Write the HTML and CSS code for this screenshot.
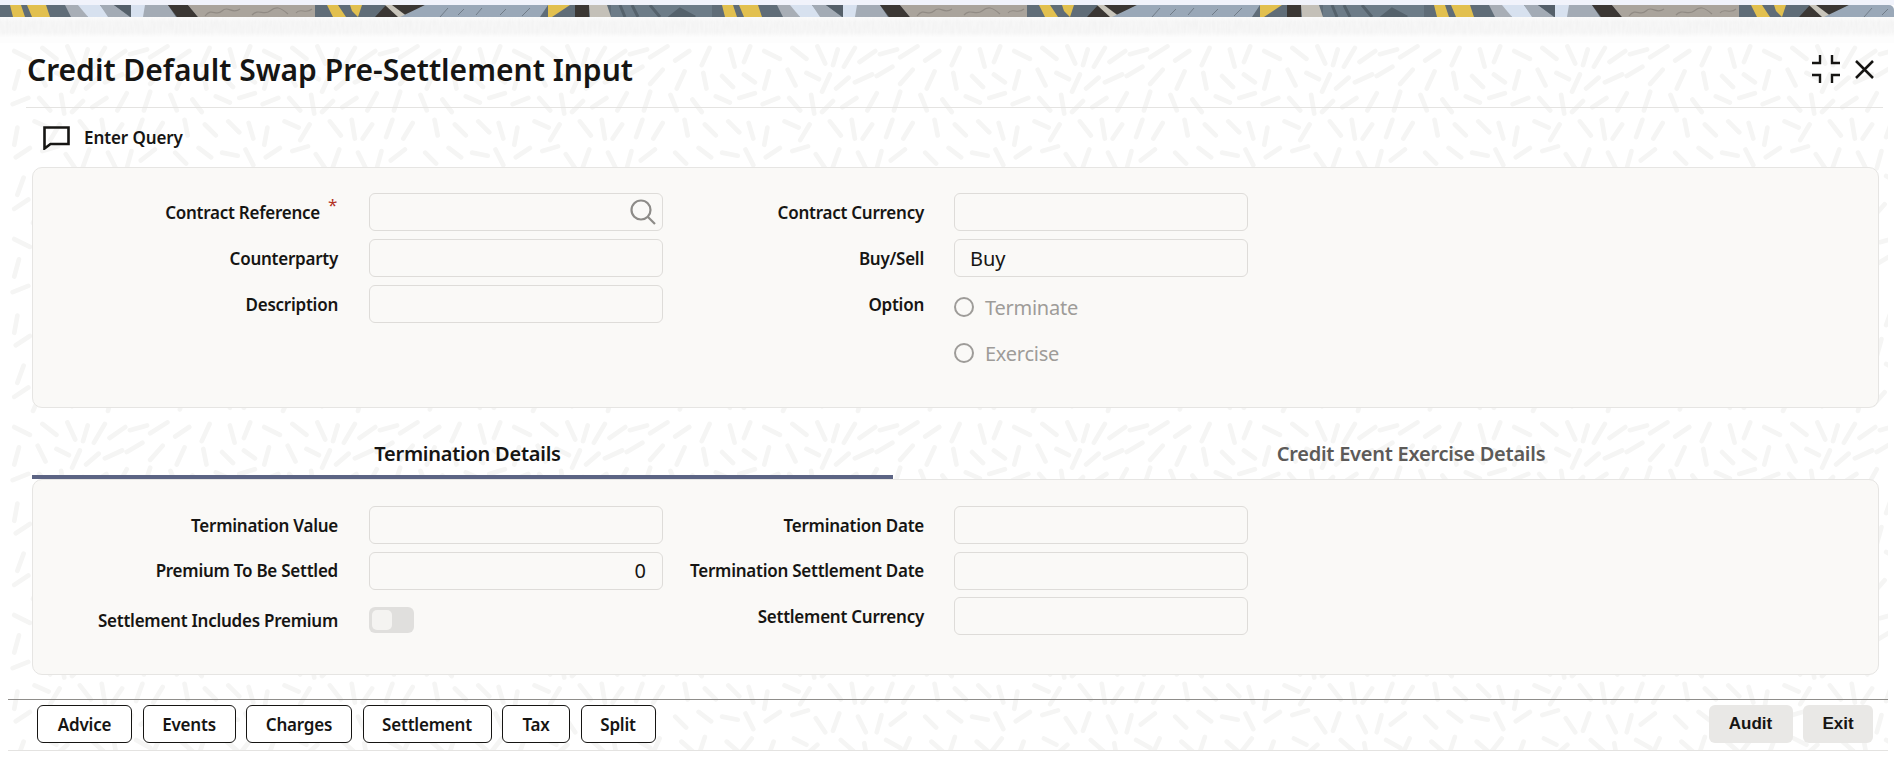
FILE: index.html
```html
<!DOCTYPE html>
<html lang="en">
<head>
<meta charset="utf-8">
<title>Credit Default Swap Pre-Settlement Input</title>
<link rel="stylesheet" href="styles.css">
</head>
<body>
<div class="top-pale"></div>
<div class="banner"></div>
<div class="noise"></div>
<div class="gap"></div>
<main class="window">
<header class="title-bar">
<h1 class="title">Credit Default Swap Pre-Settlement Input</h1>
<div class="win-icons">
<svg width="30" height="30" viewBox="0 0 30 30" fill="none" stroke="#161513" stroke-width="2.4"><path d="M9 1V9H1M21 1V9H29M9 29V21H1M21 29V21H29"/></svg>
<svg width="19" height="19" viewBox="0 0 19 19" fill="none" stroke="#161513" stroke-width="2.5"><path d="M1 1L18 18M18 1L1 18"/></svg>
</div>
</header>
<div class="toolbar">
<svg width="27" height="24" viewBox="0 0 27 24" fill="none" stroke="#161513" stroke-width="2.6" stroke-linejoin="miter"><path d="M1.5 1.5H25.5V18H7.5L1.5 22.5Z"/></svg>
<span>Enter Query</span>
</div>
<section class="panel panel-top">
<div class="col">
<div class="row"><label class="lbl lbl-req">Contract Reference<b class="req">*</b></label><div class="input search"><svg width="26" height="26" viewBox="0 0 26 26" fill="none" stroke="#8d8b88" stroke-width="2.2"><circle cx="11" cy="11" r="9.5"/><path d="M17.5 17.5L25 25"/></svg></div></div>
<div class="row"><label class="lbl">Counterparty</label><div class="input"></div></div>
<div class="row"><label class="lbl">Description</label><div class="input"></div></div>
</div>
<div class="col col-2">
<div class="row"><label class="lbl">Contract Currency</label><div class="input"></div></div>
<div class="row"><label class="lbl">Buy/Sell</label><div class="input">Buy</div></div>
<div class="row"><label class="lbl">Option</label><div class="radio"><i></i>Terminate</div></div>
<div class="row"><span class="lbl"></span><div class="radio"><i></i>Exercise</div></div>
</div>
</section>
<nav class="tabs">
<div class="tab active">Termination Details</div>
<div class="tab tab-2">Credit Event Exercise Details</div>
</nav>
<section class="panel panel-tab">
<div class="col">
<div class="row"><label class="lbl">Termination Value</label><div class="input"></div></div>
<div class="row"><label class="lbl">Premium To Be Settled</label><div class="input num">0</div></div>
<div class="row row-switch"><label class="lbl">Settlement Includes Premium</label><div class="switch"><i></i></div></div>
</div>
<div class="col col-2">
<div class="row"><label class="lbl">Termination Date</label><div class="input"></div></div>
<div class="row"><label class="lbl">Termination Settlement Date</label><div class="input"></div></div>
<div class="row"><label class="lbl">Settlement Currency</label><div class="input"></div></div>
</div>
</section>
<footer class="footer">
<div class="btns">
<button class="btn btn-advice">Advice</button><button class="btn btn-events">Events</button><button class="btn btn-charges">Charges</button><button class="btn btn-settlement">Settlement</button><button class="btn btn-tax">Tax</button><button class="btn btn-split">Split</button>
</div>
<div class="btns">
<button class="btn2 btn-audit">Audit</button><button class="btn2">Exit</button>
</div>
</footer>
</main>
</body>
</html>
```
FILE: styles.css
```css
* { box-sizing: border-box; }
html, body { margin: 0; height: 778px; overflow: hidden; background: #fff; }
body { font-family: "Noto Sans", sans-serif; color: #161513; font-size: 17px; letter-spacing: -0.25px; }
.top-pale { height: 5px; background: #f1f3fb; }
.banner {
  height: 12px; border-top-right-radius: 5px;
  background: url("data:image/svg+xml,%3Csvg xmlns='http://www.w3.org/2000/svg' width='712' height='12'%3E%3Crect width='712' height='12' fill='%23606d78'/%3E%3Cpath d='M10 0H21L25 12H13ZM27 0H46L50 12H32Z' fill='%23e2c04f'/%3E%3Cpath d='M65 0H80L88 12H71Z' fill='%23a8aeb6'/%3E%3Cpath d='M78 0H100L110 12H88Z' fill='%23d7e1ef'/%3E%3Cpath d='M100 0H130L114 0L130 12H108Z' fill='%23a3abb5'/%3E%3Cpath d='M114 0H131V12Z' fill='%2355606a'/%3E%3Cpath d='M131 0H146L144 12H131Z' fill='%23d7e1ef'/%3E%3Cpath d='M145 0H168L176 12H143Z' fill='%23a3abb5'/%3E%3Cpath d='M168 0H188L198 12H177Z' fill='%233b3734'/%3E%3Cpath d='M188 0H315V12H198Z' fill='%23aaa49c'/%3E%3Cpath d='M205 11C212 2 216 12 222 6S232 10 240 4M252 10C258 3 264 11 270 6S280 2 288 9M296 8C300 2 306 10 312 4' fill='none' stroke='%23918b84' stroke-width='1.2'/%3E%3Cpath d='M315 0H380V12H315Z' fill='%23606d78'/%3E%3Cpath d='M327 0H338L346 12H333ZM350 0H362L358 12 352 6Z' fill='%23e2c04f'/%3E%3Cpath d='M375 12L386 0H425L405 12Z' fill='%233b3734'/%3E%3Cpath d='M385 0H392L408 12H398Z' fill='%23c9c5bb'/%3E%3Cpath d='M425 0H548L540 12H400Z' fill='%239aa8b8'/%3E%3Cpath d='M440 12L448 3M458 10L464 4M476 10L482 3M500 10L506 4M522 11L530 3' stroke='%23717c88' stroke-width='1'/%3E%3Cpath d='M548 0H570L552 12H548Z' fill='%23e2c04f'/%3E%3Cpath d='M575 0H589V12H575Z' fill='%233b3734'/%3E%3Cpath d='M589 0H607L611 12H590Z' fill='%23c4c0b8'/%3E%3Cpath d='M611 0H722V12H611Z' fill='%236d7c88'/%3E%3Cpath d='M620 0L625 12M632 0L638 12M650 0L660 12M670 12L680 4L695 12Z' stroke='%2355626c' stroke-width='3' fill='%2355626c'/%3E%3C/svg%3E") 0 0 repeat-x;
}
.noise {
  height: 20px;
  background:
    linear-gradient(180deg, rgba(255,255,255,.6) 0, rgba(255,255,255,0) 25%, rgba(255,255,255,0) 75%, rgba(255,255,255,.75) 100%),
    url("data:image/svg+xml,%3Csvg xmlns='http://www.w3.org/2000/svg' width='512' height='20'%3E%3Cfilter id='n'%3E%3CfeTurbulence type='fractalNoise' baseFrequency='.45 .09' numOctaves='2' seed='4' stitchTiles='stitch'/%3E%3CfeColorMatrix values='0 0 0 0 .88 0 0 0 0 .88 0 0 0 0 .88 1.2 0 0 0 -.3'/%3E%3C/filter%3E%3Crect width='512' height='20' fill='%23f7f7f7'/%3E%3Crect width='512' height='20' filter='url(%23n)'/%3E%3C/svg%3E");
}
.gap { height: 6px; background: #fdfdfd; }
.window {
  margin: 0 6px 0 8px; height: 708px; border-bottom: 1px solid #e4e3e1; background-color: #fff;
  background-size: 250px 188px;
  background-image: url("data:image/svg+xml,%3Csvg xmlns='http://www.w3.org/2000/svg' width='320' height='240' viewBox='0 0 320 240' fill='none' stroke='%23f5f5f4' stroke-width='6' stroke-linecap='round'%3E%3Cpath d='M8 10l20 10M44 6l18 14M76 4l10 22M102 8l-6 20M124 6l-14 24M150 10l-20 14M178 8l-22 6M204 4l-22 14M232 10l-18 12M258 6l-10 22M284 8l6 22M310 4l-8 20M14 36l-6 22M38 34l10 20M62 38l16 8M92 40l-10 22M116 44l-16 14M146 40l-22 10M172 30l-20 12M198 34l-16 18M226 36l-10 22M250 38l4 20M274 42l14 14M302 40l14 10M6 78l20 -8M40 70l14 16M68 66l4 24M96 74l-14 14M126 70l-18 12M152 64l-12 22M182 62l-8 24M208 66l8 20M236 72l12 16M266 68l18 8M296 70l20 -6M12 108l-4 22M34 100l18 8M66 104l-12 20M92 100l14 18M120 98l4 24M146 104l-12 18M172 98l-8 22M198 102l-12 20M226 98l4 20M252 104l14 14M282 100l14 14M308 102l6 20M10 146l18 -12M44 138l20 -6M74 142l12 18M104 136l-8 22M128 140l10 20M158 138l-6 22M188 136l-18 14M214 140l14 14M244 134l16 12M274 140l20 4M304 136l10 20M20 172l-8 22M46 168l16 8M76 176l-16 14M106 170l16 14M136 174l4 22M164 170l18 10M194 168l-10 22M222 172l16 14M252 166l-8 24M280 172l16 14M312 168l-14 18M8 212l18 -12M42 208l-10 22M70 206l12 18M100 204l20 10M134 208l-6 22M162 206l-14 16M192 204l20 8M226 206l-6 22M252 208l16 14M288 204l-4 22M312 210l-10 16' /%3E%3C/svg%3E");
}
.title-bar { height: 65px; margin: 0 5px 0 18px; padding: 0 9px 12px 1px; display: flex; justify-content: space-between; align-items: center; border-bottom: 1px solid #e4e3e1; }
.title { margin: 0; font-size: 30px; font-weight: 600; letter-spacing: 0; }
.win-icons { display: flex; gap: 14px; align-items: center; }
.toolbar { height: 59px; display: flex; align-items: center; gap: 14px; padding-left: 35px; font-weight: 600; font-size: 17px; letter-spacing: -0.1px; }
.panel { margin: 0 9px 0 24px; background: #faf9f7; border: 1px solid #e6e5e3; border-radius: 10px; display: flex; }
.panel-top { height: 241px; padding-top: 25px; }
.panel-tab { height: 196px; padding-top: 26px; }
.panel-tab .col { gap: 7.5px; }
.col { width: 628px; display: flex; flex-direction: column; gap: 8px; }
.col-2 { width: 586px; }
.row { display: flex; align-items: center; height: 38px; }
.lbl { flex: 0 0 305px; margin-right: 31px; text-align: right; font-weight: 600; }
.col-2 .lbl { flex-basis: 263px; margin-right: 30px; }
.lbl-req { position: relative; padding-right: 18px; }
.req { position: absolute; right: 1px; top: -8px; color: #b3331f; font-size: 17px; font-weight: 400; }
.input { flex: 0 0 294px; height: 38px; border: 1px solid #dedcd9; border-radius: 6px; display: flex; align-items: center; padding: 0 16px 0 15px; font-size: 20px; letter-spacing: 0; }
.search { justify-content: flex-end; padding-right: 6px; }
.num { justify-content: flex-end; }
.radio { display: flex; align-items: center; gap: 11px; padding-top: 6px; color: #9e9c99; font-size: 20px; }
.radio i { width: 20px; height: 20px; border: 2px solid #9e9c99; border-radius: 50%; }
.switch { width: 45px; height: 26px; border-radius: 6px; background: #e0dfdd; padding: 3px; }
.switch i { display: block; width: 20px; height: 20px; border-radius: 5px; background: #f4f3f1; }
.row-switch { height: 46px; }
.tabs { display: flex; height: 71px; margin: 0 9px 0 24px; }
.tab { display: flex; justify-content: center; align-items: center; padding-top: 23px; font-size: 20px; font-weight: 600; color: #5c5a58; }
.tab.active { flex: 0 0 861px; padding-left: 10px; color: #161513; border-bottom: 4px solid #5c6484; }
.tab-2 { flex: 1; padding-left: 50px; padding-bottom: 4px; }
.footer { margin-top: 24px; border-top: 1px solid #8f8d8a; height: 51px; display: flex; justify-content: space-between; padding: 5px 15px 0 29px; }
.btns { display: flex; gap: 10.5px; }
.btn { height: 38px; padding: 0; border: 1px solid #161513; border-radius: 6px; background: #fff; font: 600 17px "Noto Sans", sans-serif; letter-spacing: -0.2px; color: #161513; }
.btn-advice { width: 95px; }
.btn-events { width: 93px; }
.btn-charges { width: 106px; }
.btn-settlement { width: 129px; }
.btn-tax { width: 68px; }
.btn-split { width: 75px; }
.btn2 { height: 38px; width: 70px; border: 0; border-radius: 6px; background: #e9e8e6; font: 700 17px "Liberation Sans", sans-serif; color: #161513; }
.btn-audit { width: 84px; }
```
